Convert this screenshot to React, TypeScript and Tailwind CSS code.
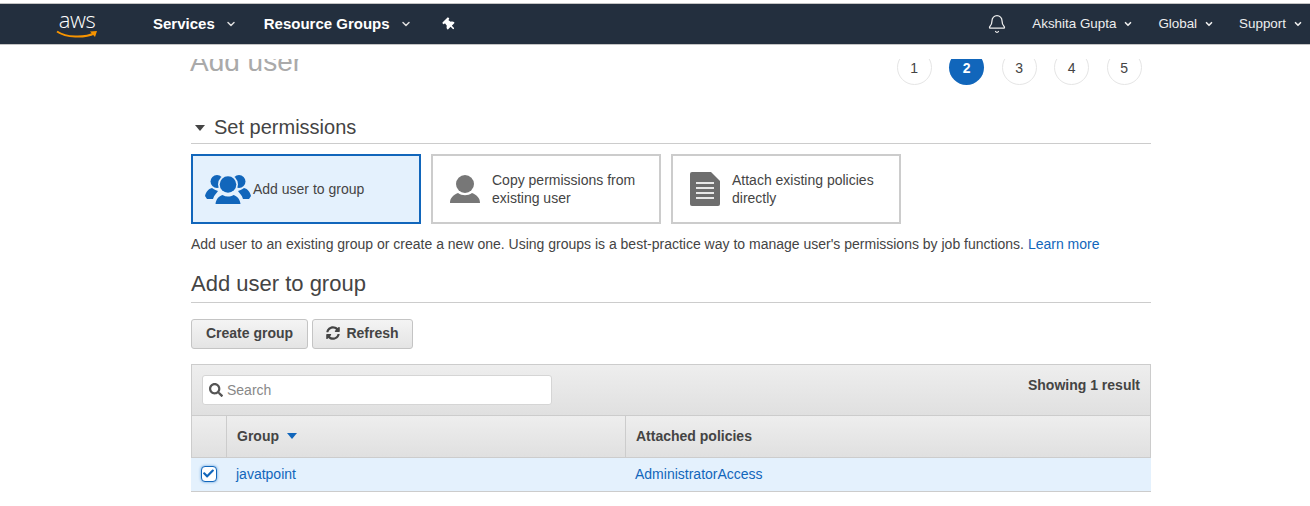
import { Bell, ChevronDown } from "lucide-react";
import { FaCheck, FaSearch, FaSyncAlt, FaThumbtack } from "react-icons/fa";

function Caret({ className }: { className: string }) {
  return (
    <svg width="10" height="6" viewBox="0 0 10 6" className={className}>
      <path d="M0 0h10L5 6z" fill="currentColor" />
    </svg>
  );
}

function GroupIcon() {
  return (
    <svg width="46" height="30" viewBox="0 0 46 30" className="shrink-0 text-[#1166bb]" fill="currentColor">
      <circle cx="12" cy="7.500" r="6.500" />
      <circle cx="34" cy="7.500" r="6.500" />
      <path d="M0 22c1-4 3-7 7-8 3 2 4 2 6 3-1 2-4 4-5 8H2z" />
      <path d="M46 22c-1-4-3-7-7-8-3 2-4 2-6 3 1 2 4 4 5 8h6z" />
      <circle cx="23" cy="10.500" r="10" fill="#e4f1fd" />
      <circle cx="23" cy="10.500" r="8.300" />
      <path d="M9 30c0-6 4-9 8-10.500 4 2.500 8 2.500 12 0 4 1.500 8 4.500 8 10.500z" fill="#e4f1fd" />
      <path d="M10.500 30c.5-5 3.500-8 7-9 3.500 2 7.500 2 11 0 3.500 1 6.500 4 7 9z" />
    </svg>
  );
}

function UserIcon() {
  return (
    <svg width="30" height="28" viewBox="0 0 30 28" className="shrink-0 text-[#777777]" fill="currentColor">
      <circle cx="15" cy="9" r="9" />
      <path d="M0 28c0-5 3-8 8-10 4 3 10 3 14 0 5 2 8 5 8 10z" />
    </svg>
  );
}

function DocIcon() {
  return (
    <svg width="30" height="34" viewBox="0 0 30 34" className="shrink-0">
      <path d="M2 0h19l9 9v23a2 2 0 0 1-2 2H2a2 2 0 0 1-2-2V2a2 2 0 0 1 2-2z" fill="#6e6e6e" />
      <path d="M6 10h18v2H6zM6 15h18v2H6zM6 20h18v2H6zM6 25h18v2H6z" fill="#e8e8e8" />
    </svg>
  );
}

function NavMenu({ label, className }: { label: string; className: string }) {
  return (
    <div className={`flex items-center text-[13.400px] text-[#eeeeee] ${className}`}>
      {label}
      <ChevronDown size={10} strokeWidth={4} className="ml-[7px]" />
    </div>
  );
}

const STEPS = ["1", "2", "3", "4", "5"];

export default function App() {
  return (
    <div className="flex h-[506px] w-[1310px] flex-col overflow-hidden bg-white font-['Liberation_Sans',Arial,sans-serif] text-sm text-[#444444]">
      <div className="h-[3px] bg-white" />
      <nav className="flex h-[42px] shrink-0 items-center border-y border-y-[#c4c4c4] bg-[#232f3e] text-white">
        <div className="ml-[56px] flex w-[42px] flex-col items-center">
          <span className="h-[19px] font-['Open_Sans',sans-serif] text-[22px] leading-[18px] font-light tracking-[-0.5px]">
            aws
          </span>
          <svg width="42" height="9" viewBox="0 0 42 9" fill="none" className="mt-px">
            <path d="M1 1.500C10 7.500 28 8.500 39 3" stroke="#f79400" strokeWidth="2" />
            <path d="M34 1.500l7-.5-2 6z" fill="#f79400" />
          </svg>
        </div>
        <span className="ml-[55px] text-[15px] font-bold">Services</span>
        <ChevronDown size={12} strokeWidth={3} className="ml-[10px] text-[#dddddd]" />
        <span className="ml-[27px] text-[15px] font-bold">Resource Groups</span>
        <ChevronDown size={12} strokeWidth={3} className="ml-[10px] text-[#dddddd]" />
        <FaThumbtack size={13} className="ml-[31px] -rotate-45" />
        <Bell size={20} strokeWidth={1.500} className="ml-auto text-[#eeeeee]" />
        <NavMenu label="Akshita Gupta" className="ml-[25px]" />
        <NavMenu label="Global" className="ml-[25px]" />
        <NavMenu label="Support" className="mr-[7px] ml-[25px]" />
      </nav>

      <div className="mt-[14px] min-h-0 flex-1 overflow-hidden">
        <main className="ml-[191px] -mt-[9px] w-[960px]">
          <div className="flex h-[35px] items-start justify-between">
            <h1 className="mt-[-5px] ml-[-1px] text-[28px] leading-[34px] text-[#aaaaaa]">Add user</h1>
            <ol className="mr-[9.250px] flex gap-[17.500px]">
              {STEPS.map((step) => (
                <li
                  key={step}
                  className={`flex size-[35px] items-center justify-center rounded-full text-sm ${
                    step === "2" ? "bg-[#1166bb] font-bold text-white" : "border border-[#e5e5e5] bg-white text-[#444444]"
                  }`}
                >
                  {step}
                </li>
              ))}
            </ol>
          </div>

          <div className="mt-[26px] flex h-[33px] items-center border-b border-[#cccccc]">
            <Caret className="mt-[2px] ml-[4px] text-[#444444]" />
            <h2 className="ml-[9px] text-[20px] leading-[26px] text-[#444444]">Set permissions</h2>
          </div>

          <div className="mt-[10px] flex gap-[10px]">
            <button className="flex h-[70px] w-[230px] items-center border-2 border-[#1166bb] bg-[#e4f1fd] pl-[12px] text-left leading-[18px]">
              <GroupIcon />
              <span className="ml-[2px]">Add user to group</span>
            </button>
            <button className="flex h-[70px] w-[230px] items-center border-2 border-[#cccccc] bg-white pl-[17px] text-left leading-[18px]">
              <UserIcon />
              <span className="ml-[12px]">
                Copy permissions from
                <br />
                existing user
              </span>
            </button>
            <button className="flex h-[70px] w-[230px] items-center border-2 border-[#cccccc] bg-white pl-[17px] text-left leading-[18px]">
              <DocIcon />
              <span className="ml-[12px]">
                Attach existing policies
                <br />
                directly
              </span>
            </button>
          </div>

          <p className="mt-[11px] h-[18px] leading-[18px]">
            Add user to an existing group or create a new one. Using groups is a best-practice way to manage user's
            permissions by job functions. <span className="text-[#1166bb]">Learn more</span>
          </p>

          <h2 className="mt-[18px] h-[32px] border-b border-[#cccccc] text-[22px] leading-[26px] text-[#444444]">
            Add user to group
          </h2>

          <div className="mt-[16px] flex gap-1">
            <button className="h-[30px] w-[117px] rounded-[3px] border border-[#c4c4c4] bg-linear-to-b from-[#f4f4f4] to-[#e4e4e4] pb-[2px] font-bold">
              Create group
            </button>
            <button className="flex h-[30px] w-[101px] items-center justify-center gap-[6px] rounded-[3px] border border-[#c4c4c4] bg-linear-to-b from-[#f4f4f4] to-[#e4e4e4] pb-[2px] font-bold">
              <FaSyncAlt size={14} />
              Refresh
            </button>
          </div>

          <section className="mt-[15px]">
            <div className="flex h-[52px] items-start justify-between border border-[#cccccc] bg-linear-to-b from-[#eeeeee] to-[#e0e0e0] pt-[10px] pr-[10px] pl-[10px]">
              <div className="flex h-[30px] w-[350px] items-center rounded-[3px] border border-[#d5d5d5] bg-white pl-[6px]">
                <FaSearch size={14} className="text-[#555555]" />
                <span className="ml-[4px] text-[#888888]">Search</span>
              </div>
              <span className="font-bold">Showing 1 result</span>
            </div>
            <div className="grid h-[42px] grid-cols-[35px_399px_1fr] border-x border-b border-[#cccccc] bg-linear-to-b from-[#eeeeee] to-[#e0e0e0] font-bold">
              <div className="border-r border-[#cccccc]" />
              <div className="flex items-center gap-[8px] border-r border-[#cccccc] pb-[2px] pl-[10px]">
                Group
                <Caret className="mt-px text-[#1166bb]" />
              </div>
              <div className="flex items-center pb-[2px] pl-[10px]">Attached policies</div>
            </div>
            <div className="grid h-[34px] grid-cols-[35px_399px_1fr] items-center border-b border-[#cccccc] bg-[#e4f1fd] pb-[2px] text-[#1166bb]">
              <div className="flex justify-center">
                <span className="flex size-[16px] items-center justify-center rounded-[4px] border border-[#1166bb] bg-white shadow-[0_0_3px_#5b9bdb]">
                  <FaCheck size={11} className="text-[#1166bb]" />
                </span>
              </div>
              <span className="pl-[10px]">javatpoint</span>
              <span className="pl-[10px]">AdministratorAccess</span>
            </div>
          </section>
        </main>
      </div>
    </div>
  );
}
